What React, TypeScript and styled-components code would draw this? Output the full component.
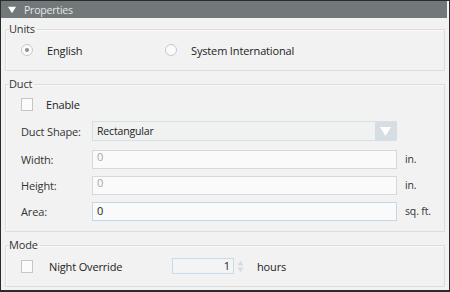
import React from "react";
import styled, { createGlobalStyle } from "styled-components";

const GlobalStyle = createGlobalStyle`
  html, body {
    margin: 0;
    padding: 0;
    background: #ffffff;
  }
  body {
    font-family: "Open Sans", "Noto Sans", sans-serif;
    font-size: 11px;
    letter-spacing: -0.15px;
    color: #333;
  }
`;

const Frame = styled.div`
  width: 450px;
  height: 292px;
  box-sizing: border-box;
  border: 1px solid #2b2b2b;
  border-bottom-width: 2px;
  background: #f2f2f2;
  display: flex;
  flex-direction: column;
  overflow: hidden;
`;

const Header = styled.div`
  height: 17px;
  flex: none;
  background: #71787a;
  display: flex;
  align-items: center;
  gap: 8px;
  padding-left: 7px;
  color: #e4e6e6;
  font-size: 10.5px;
  letter-spacing: -0.2px;
  border-right: 2px solid #f2f2f2;
`;

const Body = styled.div`
  flex: 1;
  display: flex;
  flex-direction: column;
  padding: 4px 4px 0 4px;
  gap: 6px;
`;

const Group = styled.fieldset<{ h: number }>`
  margin: 0;
  padding: 0 0 0 15px;
  height: ${(p) => p.h}px;
  flex: none;
  box-sizing: border-box;
  border: 1px solid #dcdcdc;
  box-shadow: inset 1px 1px 0 #fafafa;
  border-radius: 1px;
  display: flex;
  flex-direction: column;
`;

const Legend = styled.legend`
  padding: 0 2px 0 0;
  margin-left: -12px;
  font-size: 11px;
  color: #333;
  line-height: 14px;
`;

const RadioRow = styled.div`
  display: flex;
  align-items: center;
  height: 28px;
`;

const RadioItem = styled.label<{ w: number }>`
  display: flex;
  align-items: center;
  width: ${(p) => p.w}px;
  gap: 14px;
  color: #222;
  font-size: 11px;
`;

const RadioDot = styled.span<{ checked?: boolean }>`
  width: 10px;
  height: 10px;
  border-radius: 50%;
  border: 1px solid #c8c8c8;
  background: #fbfbfb;
  display: flex;
  align-items: center;
  justify-content: center;
  &::after {
    content: "";
    width: 4px;
    height: 4px;
    border-radius: 50%;
    background: ${(p) => (p.checked ? "#8e8e8e" : "transparent")};
  }
`;

const CheckRow = styled.label<{ gap: number; w?: number }>`
  display: flex;
  align-items: center;
  gap: ${(p) => p.gap}px;
  height: 22px;
  width: ${(p) => (p.w ? `${p.w}px` : "auto")};
  flex: none;
  color: #222;
  font-size: 11px;
`;

const CheckBox = styled.span`
  width: 10px;
  height: 11px;
  border: 1px solid #c6c6c6;
  background: #fbfbfb;
  flex: none;
`;

const FieldRow = styled.div`
  display: flex;
  align-items: center;
  height: 26px;
`;

const FieldLabel = styled.span`
  width: 71px;
  color: #333;
  font-size: 11px;
`;

const TextBox = styled.div<{ active?: boolean }>`
  width: 305px;
  height: 19px;
  box-sizing: border-box;
  border: 1px solid ${(p) => (p.active ? "#c3d8e6" : "#d8d8d8")};
  background: #fafafa;
  padding: 0 4px;
  color: ${(p) => (p.active ? "#222" : "#a8a8a8")};
  font-size: 11px;
  line-height: ${(p) => (p.active ? "16px" : "12px")};
`;

const Unit = styled.span`
  margin-left: 8px;
  color: #333;
  font-size: 10.5px;
`;

const Select = styled.div`
  width: 305px;
  height: 20px;
  box-sizing: border-box;
  border: 1px solid #d6dfe4;
  background: #f0f1f1;
  display: flex;
  align-items: center;
  justify-content: space-between;
  padding-left: 4px;
  color: #222;
  font-size: 10.5px;
`;

const SelectArrow = styled.span`
  width: 21px;
  height: 100%;
  background: #d5dee3;
  display: flex;
  align-items: center;
  justify-content: center;
`;

const ModeRow = styled.div`
  display: flex;
  align-items: center;
  height: 28px;
`;

const Spinner = styled.div`
  display: flex;
  align-items: center;
  gap: 3px;
`;

const SpinBox = styled.div`
  width: 62px;
  height: 16px;
  box-sizing: border-box;
  border: 1px solid #c8dbe8;
  background: #f4f4f4;
  text-align: right;
  padding-right: 3px;
  font-size: 11px;
  line-height: 14px;
  color: #222;
`;

const SpinArrows = styled.span`
  display: flex;
  flex-direction: column;
  gap: 1px;
`;

const Hours = styled.span`
  margin-left: 13px;
  color: #222;
  font-size: 11px;
`;

const Tri = ({ down, color, w, h }: { down?: boolean; color: string; w: number; h: number }) => (
  <svg width={w} height={h} viewBox="0 0 10 10">
    <polygon points={down ? "0,1 10,1 5,9" : "0,9 10,9 5,1"} fill={color} />
  </svg>
);

export default function App() {
  return (
    <>
      <GlobalStyle />
      <Frame>
        <Header>
          <Tri down color="#ffffff" w={8} h={8} />
          <span>Properties</span>
        </Header>
        <Body>
          <Group h={49}>
            <Legend>Units</Legend>
            <RadioRow>
              <RadioItem w={144}>
                <RadioDot checked />
                English
              </RadioItem>
              <RadioItem w={200}>
                <RadioDot />
                System International
              </RadioItem>
            </RadioRow>
          </Group>
          <Group h={155}>
            <Legend>Duct</Legend>
            <CheckRow gap={13} style={{ marginTop: 2 }}>
              <CheckBox />
              Enable
            </CheckRow>
            <FieldRow style={{ marginTop: 3 }}>
              <FieldLabel>Duct Shape:</FieldLabel>
              <Select>
                Rectangular
                <SelectArrow>
                  <Tri down color="#ffffff" w={11} h={11} />
                </SelectArrow>
              </Select>
            </FieldRow>
            <FieldRow style={{ marginTop: 2 }}>
              <FieldLabel>Width:</FieldLabel>
              <TextBox>0</TextBox>
              <Unit>in.</Unit>
            </FieldRow>
            <FieldRow>
              <FieldLabel>Height:</FieldLabel>
              <TextBox>0</TextBox>
              <Unit>in.</Unit>
            </FieldRow>
            <FieldRow>
              <FieldLabel>Area:</FieldLabel>
              <TextBox active>0</TextBox>
              <Unit>sq. ft.</Unit>
            </FieldRow>
          </Group>
          <Group h={49}>
            <Legend>Mode</Legend>
            <ModeRow>
              <CheckRow gap={16} w={151}>
                <CheckBox />
                Night Override
              </CheckRow>
              <Spinner>
                <SpinBox>1</SpinBox>
                <SpinArrows>
                  <Tri color="#d2dde4" w={7} h={6} />
                  <Tri down color="#d2dde4" w={7} h={6} />
                </SpinArrows>
              </Spinner>
              <Hours>hours</Hours>
            </ModeRow>
          </Group>
        </Body>
      </Frame>
    </>
  );
}
